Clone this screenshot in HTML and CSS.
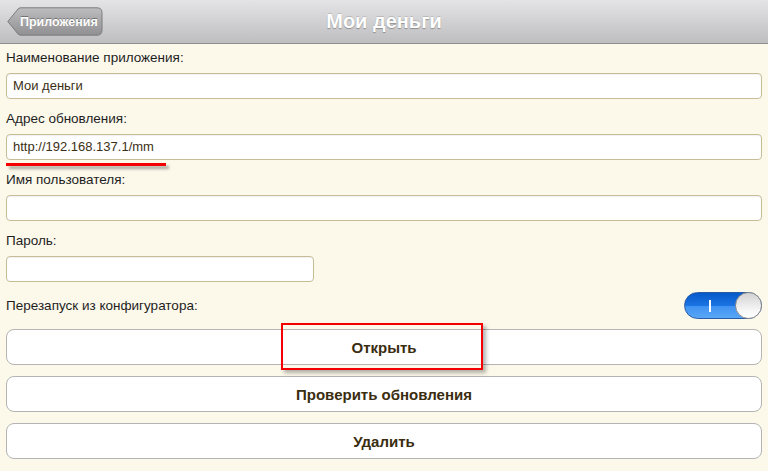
FILE: index.html
```html
<!DOCTYPE html>
<html lang="ru">
<head>
  <meta charset="UTF-8" />
  <meta name="viewport" content="width=device-width, initial-scale=1.0"/>
  <title>Мои деньги</title>
  <link rel="stylesheet" href="styles.css">
</head>
<body>

  <div class="top-bar">
    <a class="back-btn" href="#">
      <svg class="back-shape" width="96" height="29" viewBox="0 0 96 29">
        <defs>
          <linearGradient id="backGrad" x1="0" y1="0" x2="0" y2="1">
            <stop offset="0" stop-color="#bdbdbf"/>
            <stop offset="1" stop-color="#909092"/>
          </linearGradient>
        </defs>
        <path d="M0.8 14.5 L11 2 Q12 0.8 14 0.8 H90 Q95 0.8 95 5.8 V23.2 Q95 28.2 90 28.2 H14 Q12 28.2 11 27 Z"
              fill="url(#backGrad)" stroke="#7c7c7e" stroke-width="1"/>
      </svg>
      <span class="back-text">Приложения</span>
    </a>
    <div class="title">Мои деньги</div>
    <div></div>
  </div>

  <div class="form">
    <div class="field">
      <label>Наименование приложения:</label>
      <div class="input">Мои деньги</div>
    </div>

    <div class="field">
      <label>Адрес обновления:</label>
      <div class="input">http://192.168.137.1/mm</div>
    </div>

    <div class="field">
      <label>Имя пользователя:</label>
      <div class="input"></div>
    </div>

    <div class="field">
      <label>Пароль:</label>
      <div class="input input-short"></div>
    </div>

    <div class="switch-row">
      <label>Перезапуск из конфигуратора:</label>
      <div class="switch">
        <span class="switch-on"></span>
        <span class="switch-knob"></span>
      </div>
    </div>

    <div class="buttons">
      <button class="btn">Открыть</button>
      <button class="btn">Проверить обновления</button>
      <button class="btn">Удалить</button>
    </div>
  </div>

  <!-- пометки поверх скриншота -->
  <div class="mark-line"></div>
  <div class="mark-box"></div>

</body>
</html>
```

FILE: styles.css
```css
body {
  margin: 0;
  font-family: "Liberation Sans", Arial, sans-serif;
  background-color: #fcf9eb;
  color: #222;
  position: relative;
  min-height: 471px;
}

.top-bar {
  height: 43px;
  border-bottom: 1px solid #8e8e8e;
  background: linear-gradient(#e4e4e6, #bebec0);
  display: grid;
  grid-template-columns: 1fr auto 1fr;
  align-items: center;
}

.back-btn {
  position: relative;
  justify-self: start;
  margin-left: 7px;
  width: 96px;
  height: 29px;
  display: flex;
  align-items: center;
  text-decoration: none;
}

.back-shape {
  position: absolute;
  left: 0;
  top: 0;
}

.back-text {
  position: relative;
  padding-left: 13px;
  font-size: 12.5px;
  font-weight: bold;
  color: #fff;
  text-shadow: 0 -1px 0 rgba(0, 0, 0, 0.35);
}

.title {
  font-size: 20px;
  font-weight: bold;
  color: #fff;
  text-shadow: 0 1px 1px rgba(0, 0, 0, 0.3), 0 -1px 0 rgba(0, 0, 0, 0.15);
}

.form {
  padding: 6px 6px 0;
}

.field {
  margin-bottom: 12px;
}

.field label,
.switch-row label {
  display: block;
  font-size: 13.5px;
  line-height: 16px;
  color: #1e1e1e;
}

.field label {
  margin-bottom: 7px;
}

.input {
  box-sizing: border-box;
  height: 26px;
  background-color: #fff;
  border: 1px solid #c6bd98;
  border-radius: 4px;
  box-shadow: inset 0 1px 1px rgba(0, 0, 0, 0.06);
  padding: 0 6px;
  font-size: 13px;
  line-height: 24px;
  color: #3c2f14;
}

.input-short {
  width: 308px;
}

.switch-row {
  margin-top: -2px;
  height: 27px;
  display: flex;
  align-items: center;
  justify-content: space-between;
}

.switch {
  position: relative;
  box-sizing: border-box;
  width: 78px;
  height: 27px;
  border-radius: 14px;
  border: 1px solid #2a5ca6;
  background: linear-gradient(#0759c8 0%, #1c73e3 50%, #3f92f2 51%, #5aa6f6 100%);
}

.switch-on {
  position: absolute;
  left: 24px;
  top: 7px;
  width: 2px;
  height: 12px;
  background-color: #fff;
}

.switch-knob {
  position: absolute;
  right: -1px;
  top: -1px;
  box-sizing: border-box;
  width: 27px;
  height: 27px;
  border-radius: 50%;
  border: 1px solid #8c8c8c;
  background: linear-gradient(#d2d2d2, #f7f7f7 70%, #ffffff);
}

.buttons {
  margin-top: 10px;
  display: flex;
  flex-direction: column;
  gap: 11px;
}

.btn {
  height: 36px;
  background-color: #fff;
  border: 1px solid #b4b4b4;
  border-radius: 8px;
  font-family: "Liberation Sans", Arial, sans-serif;
  font-size: 15px;
  font-weight: bold;
  color: #3a2d10;
  padding: 0;
}

.mark-line {
  position: absolute;
  left: 6px;
  top: 163px;
  width: 160px;
  height: 3px;
  background-color: #f40000;
  box-shadow: 3px 3px 3px rgba(0, 0, 0, 0.35);
}

.mark-box {
  position: absolute;
  left: 281px;
  top: 323px;
  box-sizing: border-box;
  width: 202px;
  height: 47px;
  border: 2px solid #f40000;
  box-shadow: 3px 3px 4px rgba(0, 0, 0, 0.3);
}
```
